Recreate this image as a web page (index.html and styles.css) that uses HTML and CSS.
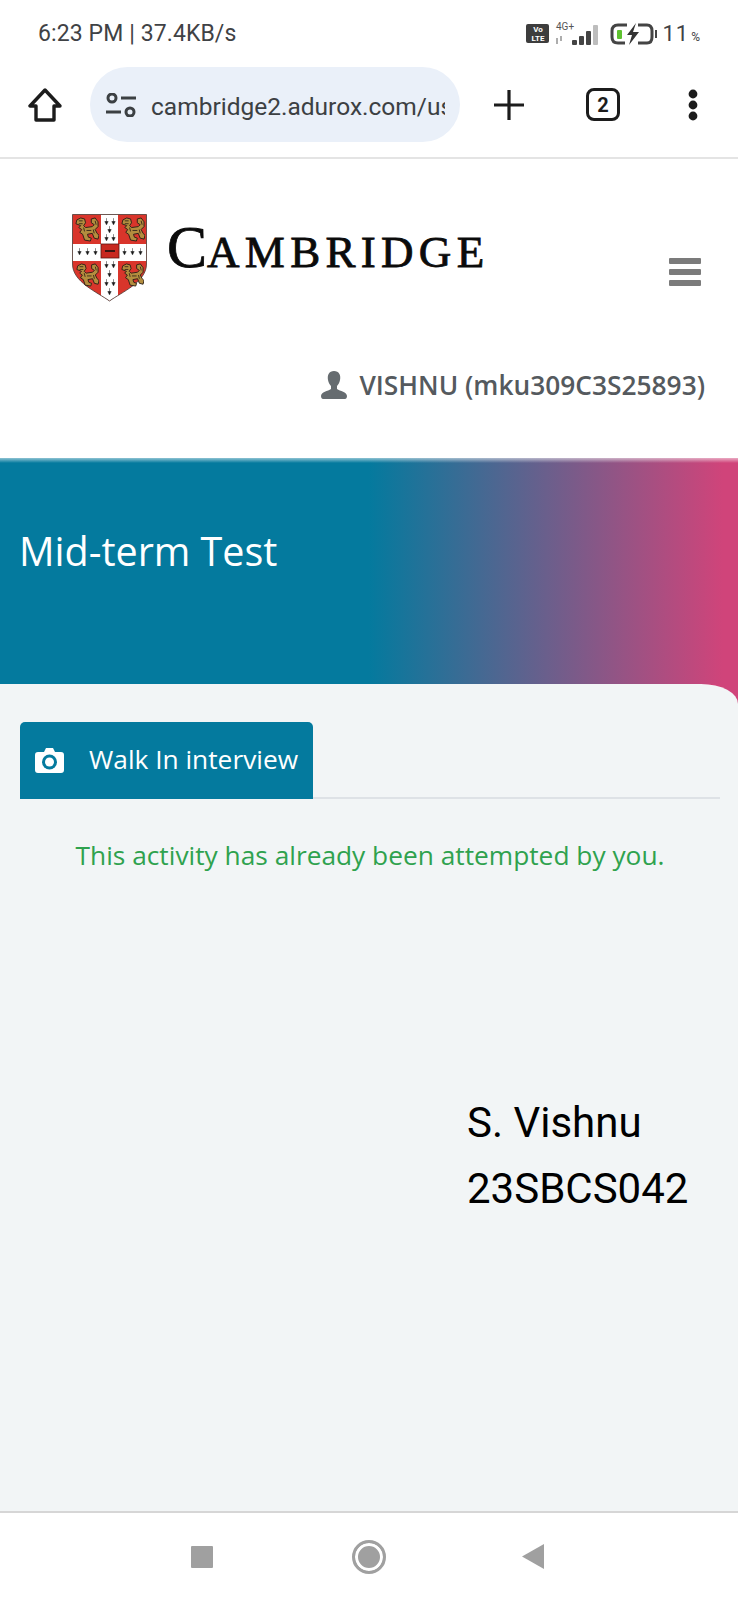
FILE: index.html
```html
<!DOCTYPE html>
<html lang="en">
<head>
<meta charset="utf-8">
<title>Mid-term Test</title>
<link rel="stylesheet" href="styles.css">
</head>
<body>
<svg class="defs" width="0" height="0" aria-hidden="true">
  <defs>
    <clipPath id="shield-clip"><path d="M.5 .5H74.500V50C74.500 68 50 78 37.500 87 25 78 .5 68 .5 50Z"/></clipPath>
  </defs>
  <symbol id="lion" viewBox="0 0 26 26">
    <path d="M2 7 3 3 7 1 11 2 12 6 10 9 12 11 19 10 21 8 18 6 18 2 22 1 25 5 25 10 22 13 24 17 26 19 25 23 21 22 19 17 14 18 15 21 18 22 17 25 11 24 9 18 6 16 8 13 5 11 7 9Z" fill="#b38d3e" stroke="#2e2218" stroke-width="1"/>
    <path d="M5 4h4M5 7h4M13 14h5M10 11l1 4M20 13l1 4M22 4l1 4" stroke="#2e2218" stroke-width=".9" fill="none"/>
  </symbol>
  <symbol id="ermine" viewBox="0 0 6 8">
    <path d="M3 0v5M1 4h4L3 8Z" fill="#1a1a1a" stroke="#1a1a1a" stroke-width=".6"/>
  </symbol>
</svg>
<div class="phone">
  <div class="status">
    <span class="clock">6:23 PM | 37.4KB/s</span>
    <div class="status-icons">
      <span class="volte">Vo<br>LTE</span>
      <svg class="signal" width="46" height="24" viewBox="0 0 46 24">
        <text x="1" y="8" class="net">4G+</text>
        <path d="M2 16v6M6 14v5" stroke="#777" stroke-width="1.2"/>
        <rect x="17" y="18" width="5" height="5" rx="1" fill="#444"/>
        <rect x="24" y="14" width="5" height="9" rx="1" fill="#444"/>
        <rect x="31" y="9" width="5" height="14" rx="1" fill="#444"/>
        <rect x="38" y="3" width="5" height="20" rx="1" fill="#bdbdbd"/>
      </svg>
      <svg class="battery" width="47" height="22" viewBox="0 0 47 22">
        <path d="M17 2H8Q2 2 2 8v6q0 6 6 6h7M28 2h9q5 0 5 6v6q0 6-5 6h-9" fill="none" stroke="#444" stroke-width="3"/>
        <rect x="7" y="7" width="5" height="9" rx="1" fill="#5ec22f"/>
        <path d="M26 0 17 12h5l-3 10 10-13h-6Z" fill="#333"/>
        <rect x="45" y="7" width="2" height="8" fill="#444"/>
      </svg>
      <span class="level">11<small>%</small></span>
    </div>
  </div>
  <div class="toolbar">
    <svg class="home" width="34" height="34" viewBox="0 0 34 34"><path d="M17 2 2 18h6v14h18V18h6Z" fill="none" stroke="#1c1c1c" stroke-width="3.4" stroke-linejoin="round"/></svg>
    <div class="pill">
      <svg width="30" height="24" viewBox="0 0 30 24"><g fill="none" stroke="#3c4043" stroke-width="3"><circle cx="6" cy="5" r="4"/><circle cx="24" cy="19" r="4"/><path d="M15 5h15M0 19h15"/></g></svg>
      <span class="url">cambridge2.adurox.com/user</span>
    </div>
    <svg class="plus" width="30" height="30" viewBox="0 0 30 30"><path d="M15 0v30M0 15h30" stroke="#1c1c1c" stroke-width="3.2"/></svg>
    <span class="tabcount">2</span>
    <svg class="more" width="10" height="32" viewBox="0 0 10 32"><circle cx="5" cy="5" r="4.4" fill="#1c1c1c"/><circle cx="5" cy="16" r="4.4" fill="#1c1c1c"/><circle cx="5" cy="27" r="4.4" fill="#1c1c1c"/></svg>
  </div>
  <header class="site-header">
    <div class="brand-row">
      <svg class="shield" width="75" height="88" viewBox="0 0 75 88">
        <g clip-path="url(#shield-clip)">
          <rect width="75" height="88" fill="#d9352b"/>
          <path d="M29 0H46V30H75V47H46V88H29V47H0V30H29Z" fill="#fff"/>
        </g>
        <path d="M.5 .5H74.500V50C74.500 68 50 78 37.500 87 25 78 .5 68 .5 50Z" fill="none" stroke="#4a3a35" stroke-width=".8"/>
        <rect x="29" y="30" width="18" height="14" fill="#c8281f" stroke="#5a1410" stroke-width=".8"/>
        <rect x="33" y="36" width="10" height="2" fill="#3a1410"/>
        <use href="#lion" x="2" y="3" width="25" height="25"/>
        <use href="#lion" x="48" y="3" width="25" height="25"/>
        <use href="#lion" x="3" y="49" width="24" height="24"/>
        <use href="#lion" x="48" y="49" width="24" height="24"/>
        <use href="#ermine" x="32" y="4" width="5" height="7"/><use href="#ermine" x="39" y="4" width="5" height="7"/>
        <use href="#ermine" x="35" y="12" width="5" height="7"/><use href="#ermine" x="32" y="20" width="5" height="7"/><use href="#ermine" x="39" y="20" width="5" height="7"/>
        <use href="#ermine" x="5" y="34" width="5" height="7"/><use href="#ermine" x="13" y="34" width="5" height="7"/><use href="#ermine" x="21" y="34" width="5" height="7"/>
        <use href="#ermine" x="50" y="34" width="5" height="7"/><use href="#ermine" x="58" y="34" width="5" height="7"/><use href="#ermine" x="66" y="34" width="5" height="7"/>
        <use href="#ermine" x="32" y="47" width="5" height="7"/><use href="#ermine" x="39" y="47" width="5" height="7"/><use href="#ermine" x="35" y="56" width="5" height="7"/>
        <use href="#ermine" x="32" y="65" width="5" height="7"/><use href="#ermine" x="39" y="65" width="5" height="7"/><use href="#ermine" x="35" y="74" width="5" height="7"/>
      </svg>
      <div class="wordmark"><span class="big">C</span>AMBRIDGE</div>
      <div class="burger"><i></i><i></i><i></i></div>
    </div>
    <div class="user-row">
      <svg width="26" height="28" viewBox="0 0 26 28"><path d="M13 0c5 0 7 4 6 9-.5 3-2 5-3 6v3c3 2 10 3 10 7 0 2-1 3-2 3H2c-1 0-2-1-2-3 0-4 7-5 10-7v-3c-1-1-2.500-3-3-6C6 4 8 0 13 0Z" fill="#666c70"/></svg>
      <span class="user-name">VISHNU (mku309C3S25893)</span>
    </div>
  </header>
  <section class="banner"><h1 class="title">Mid-term Test</h1></section>
  <main class="main">
    <div class="content">
      <div class="tabs">
        <div class="tab">
          <svg width="29" height="25" viewBox="0 0 29 25"><path d="M3 4h6l2-4h7l2 4h6q3 0 3 3v15q0 3-3 3H3q-3 0-3-3V7q0-3 3-3Z" fill="#fff"/><circle cx="14.500" cy="14" r="7.500" fill="#047a9e"/><circle cx="14.500" cy="14" r="4.500" fill="#fff"/></svg>
          <span>Walk In interview</span>
        </div>
      </div>
      <p class="notice">This activity has already been attempted by you.</p>
      <div class="signature"><div>S. Vishnu</div><div>23SBCS042</div></div>
    </div>
  </main>
  <nav class="nav">
    <span class="nav-square"></span>
    <span class="nav-circle"></span>
    <svg width="22" height="25" viewBox="0 0 22 25"><path d="M22 0V25L0 12.500Z" fill="#a0a0a0"/></svg>
  </nav>
</div>
</body>
</html>
```

FILE: styles.css
```css
* { box-sizing: border-box; }
html, body { margin: 0; padding: 0; background: #fff; }
.defs { display: block; height: 0; }
.phone { width: 738px; height: 1600px; display: flex; flex-direction: column; overflow: hidden; font-family: "Open Sans", sans-serif; }

.status { height: 60px; flex: none; display: flex; align-items: center; justify-content: space-between; padding: 7px 38px 0 38px; font-family: Roboto, sans-serif; color: #3f4245; }
.clock { font-size: 23px; font-weight: 400; letter-spacing: .1px; }
.status-icons { display: flex; align-items: center; }
.volte { width: 23px; height: 19px; background: #3d3d3d; color: #fff; border-radius: 2px; font-size: 8px; line-height: 9px; font-weight: 700; text-align: center; padding-top: 1px; }
.signal { margin-left: 6px; }
.net { font-family: Roboto, sans-serif; font-size: 10px; fill: #555; }
.battery { margin-left: 9px; }
.level { margin-left: 5px; font-size: 22px; letter-spacing: 1px; }
.level small { font-size: 12px; letter-spacing: 0; margin-left: 2px; }

.toolbar { height: 99px; flex: none; display: flex; align-items: center; padding: 0 0 8px 28px; border-bottom: 2px solid #e4e4e4; }
.home { flex: none; }
.pill { width: 370px; height: 75px; margin-left: 28px; flex: none; border-radius: 38px; background: #eaf0f9; display: flex; align-items: center; gap: 15px; padding: 0 15px 0 16px; }
.pill svg { flex: none; }
.url { margin-top: 3px; font-family: Roboto, sans-serif; font-size: 24.500px; color: #3c4043; white-space: nowrap; overflow: hidden; }
.plus { margin-left: 34px; flex: none; }
.tabcount { margin-left: 62px; width: 34px; height: 33px; flex: none; border: 3px solid #1c1c1c; border-radius: 8px; font-family: Roboto, sans-serif; font-size: 20px; font-weight: 700; color: #1c1c1c; display: flex; align-items: center; justify-content: center; }
.more { margin-left: 68px; flex: none; }

.site-header { height: 299px; flex: none; padding: 55px 0 0 72px; background: #fff; }
.brand-row { display: flex; align-items: flex-start; }
.shield { flex: none; }
.wordmark { margin: 3px 0 0 20px; font-family: "Liberation Serif", serif; font-size: 45px; line-height: 60px; color: #0b0b0b; letter-spacing: 5.300px; white-space: nowrap; -webkit-text-stroke: .8px #0b0b0b; }
.big { font-size: 60px; letter-spacing: 0; }
.burger { margin: 44px 37px 0 auto; width: 32px; display: flex; flex-direction: column; gap: 5px; }
.burger i { display: block; height: 6px; background: #7b7b7b; border-radius: 1px; }
.user-row { margin: 69px 33px 0 0; display: flex; align-items: center; justify-content: flex-end; gap: 12px; }
.user-name { font-size: 26.300px; font-weight: 600; color: #555a5e; line-height: 28px; white-space: nowrap; }

.banner { height: 226px; flex: none; padding: 67px 19px 0; background: linear-gradient(to bottom, rgba(255,255,255,.55), rgba(255,255,255,0) 5px), linear-gradient(to right, #047a9e 50%, #d0447a 98%); }
.title { margin: 0; font-size: 39.500px; line-height: 52px; font-weight: 400; color: #fff; }

.main { flex: 1; background: #d0447a; display: flex; min-height: 0; }
.content { flex: 1; display: flex; flex-direction: column; background: #f2f5f6; border-top-right-radius: 37px 20px; padding: 38px 18px 0 20px; }
.tabs { height: 77px; flex: none; display: flex; border-bottom: 2px solid #dee2e6; }
.tab { width: 293px; height: 77px; background: #047a9e; color: #fff; border-radius: 5px 5px 0 0; display: flex; align-items: center; gap: 25px; padding: 0 0 4px 15px; font-size: 26.300px; white-space: nowrap; }
.tab svg { flex: none; margin-top: 4px; }
.notice { margin: 38px 0 0; text-align: center; color: #2fa24e; font-size: 26.300px; line-height: 36px; }
.signature { margin: 217px 0 0 447px; font-family: Roboto, sans-serif; font-size: 42px; line-height: 66px; color: #000; }

.nav { height: 89px; flex: none; border-top: 2px solid #d6d6d6; background: #fff; display: flex; align-items: center; padding: 0 0 0 191px; }
.nav-square { width: 22px; height: 22px; background: #a0a0a0; border-radius: 1px; }
.nav-circle { width: 34px; height: 34px; margin-left: 139px; border-radius: 50%; background: #a0a0a0; border: 3px solid #a0a0a0; box-shadow: inset 0 0 0 3px #fff; }
.nav svg { margin-left: 136px; }
```
